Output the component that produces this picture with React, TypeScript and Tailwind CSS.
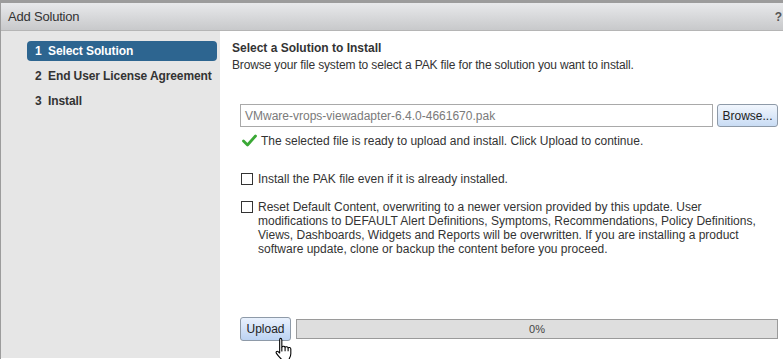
import React from 'react';

const steps = [
  { n: '1', label: 'Select Solution', active: true },
  { n: '2', label: 'End User License Agreement', active: false },
  { n: '3', label: 'Install', active: false },
];

const resetLines = [
  'Reset Default Content, overwriting to a newer version provided by this update. User',
  'modifications to DEFAULT Alert Definitions, Symptoms, Recommendations, Policy Definitions,',
  'Views, Dashboards, Widgets and Reports will be overwritten. If you are installing a product',
  'software update, clone or backup the content before you proceed.',
];

const HandCursor: React.FC = () => (
  <svg width="22" height="26" viewBox="0 0 20 24" className="absolute left-[272px] top-[334px]">
    <path
      d="M6.5 1.2c1 0 1.5.7 1.5 1.6v6.5c.3-.9 2.8-1 3 .2.4-.8 2.6-.8 2.8.5.5-.6 2.5-.4 2.5 1v4.5c0 2.3-.8 3.6-1.6 4.8v2.2H7.6v-2c-1.3-1.3-3.5-3.8-4.6-5.4-.8-1.2.4-2.4 1.6-1.6l1.4 1.3V2.8c0-.9.5-1.6.5-1.6z"
      fill="#ffffff"
      stroke="#000000"
      strokeWidth="1"
      strokeLinejoin="round"
    />
    <path d="M8 9.3v4M11 9.5v3.6M13.8 10.2v3" stroke="#000000" strokeWidth="1" fill="none" />
  </svg>
);

const App: React.FC = () => {
  return (
    <div className="relative w-[783px] h-[359px] overflow-hidden bg-white text-[#333] font-['Liberation_Sans',Arial,sans-serif] text-[12px] border-t-[3px] border-l border-[#9c9c9c]">
      <header className="h-[28px] flex items-center justify-between pl-[7px] pr-[1px] bg-gradient-to-b from-[#e8e9eb] to-[#c8c9cb] border-b border-[#b5b5b5]">
        <span className="text-[13px] text-[#333] tracking-[-0.2px]">Add Solution</span>
        <span className="text-[12px] font-bold text-[#555]">?</span>
      </header>

      <div className="flex h-[327px]">
        <aside className="w-[219px] shrink-0 bg-[#e6e6e6] pt-[10px] pl-[26px] pr-[3px] flex flex-col gap-[5px] tracking-[-0.1px]">
          {steps.map((s) => (
            <div
              key={s.n}
              className={`h-[20px] flex items-center pl-[8px] rounded-[4px] font-bold whitespace-nowrap ${s.active ? 'bg-[#2d6590] text-white' : 'text-[#333]'}`}
            >
              <span className="w-[13px]">{s.n}</span>
              <span>{s.label}</span>
            </div>
          ))}
        </aside>

        <main className="flex-1 min-w-0 pl-[12px] pt-[10px]">
          <h2 className="font-bold leading-[15px]">Select a Solution to Install</h2>
          <p className="leading-[19px] whitespace-nowrap tracking-[-0.15px]">Browse your file system to select a PAK file for the solution you want to install.</p>

          <div className="mt-[29px] ml-[8px] flex items-center gap-[4px]">
            <div className="w-[473px] h-[23px] border border-[#a9a9a9] flex items-center pl-[4px] text-[#7a7a7a]">
              VMware-vrops-viewadapter-6.4.0-4661670.pak
            </div>
            <button
              type="button"
              className="w-[61px] h-[23px] rounded-[3px] border border-[#8e9aa8] bg-gradient-to-b from-[#f1f6fd] to-[#c9dcf4] text-[#222]"
            >
              Browse...
            </button>
          </div>

          <div className="mt-[5px] ml-[10px] flex items-center gap-[4px] h-[17px]">
            <svg width="15" height="13" viewBox="0 0 15 13">
              <path d="M1.5 7l4 4L13.5 2" stroke="#3aa835" strokeWidth="2.8" fill="none" strokeLinecap="round" strokeLinejoin="round" />
            </svg>
            <span>The selected file is ready to upload and install. Click Upload to continue.</span>
          </div>

          <label className="mt-[23px] ml-[9px] flex items-start gap-[5px]">
            <span className="mt-[1px] w-[12px] h-[12px] border border-[#333] bg-white shrink-0" />
            <span className="leading-[14px]">Install the PAK file even if it is already installed.</span>
          </label>

          <label className="mt-[14px] ml-[9px] flex items-start gap-[5px]">
            <span className="mt-[1px] w-[12px] h-[12px] border border-[#333] bg-white shrink-0" />
            <span className="leading-[14px] whitespace-nowrap">
              {resetLines.map((line) => (
                <span key={line} className="block">{line}</span>
              ))}
            </span>
          </label>

          <div className="mt-[61px] ml-[8px] flex items-center gap-[5px]">
            <button
              type="button"
              className="w-[51px] h-[24px] rounded-[3px] border border-[#8e9aa8] bg-gradient-to-b from-[#e9f1fd] to-[#bcd3f3] text-[#222]"
            >
              Upload
            </button>
            <div className="w-[482px] h-[20px] border border-[#9a9a9a] bg-[#dedede] flex items-center justify-center text-[11px] text-[#444]">
              0%
            </div>
          </div>
        </main>
      </div>

      <HandCursor />
    </div>
  );
};

export default App;
